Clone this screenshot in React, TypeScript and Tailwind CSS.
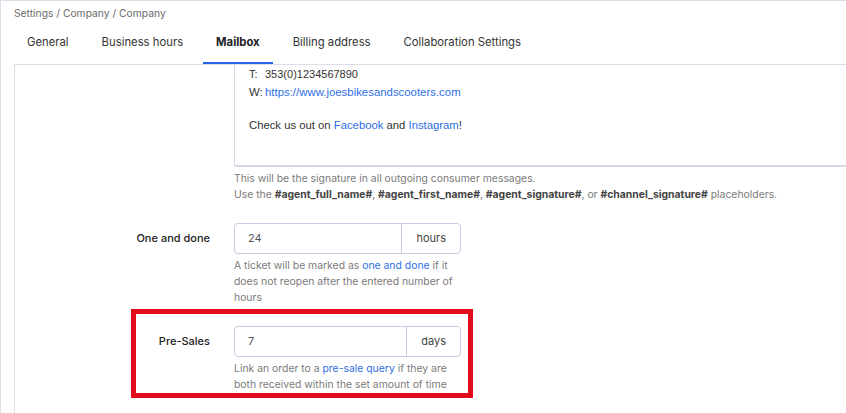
import React from "react";

const tabs = ["General", "Business hours", "Mailbox", "Billing address", "Collaboration Settings"];

function AddonInput({ value, unit }: { value: string; unit: string }) {
  return (
    <div className="flex h-[31px] w-[227px] rounded-[4px] border border-[#c9cbe0] bg-white text-[11px]">
      <div className="flex flex-1 items-center pl-[13px] text-[#555]">{value}</div>
      <div className="flex items-center border-l border-[#c9cbe0] px-[14px] text-[#444]">{unit}</div>
    </div>
  );
}

function Row({ label, children }: { label: string; children: React.ReactNode }) {
  return (
    <div className="flex">
      <div className="flex h-[31px] w-[195px] items-center justify-end text-[11px] font-medium text-[#222]">{label}</div>
      <div className="ml-[24px] w-[227px]">{children}</div>
    </div>
  );
}

export default function App() {
  return (
    <div className="h-[413px] w-[846px] overflow-hidden border-l border-t border-[#dcdde8] bg-white font-['Inter',sans-serif]">
      <div className="pl-[13px]">
        <div className="flex h-[25px] items-center text-[10.3px] text-[#6b6b6b]">Settings / Company / Company</div>

        <div className="flex h-[38px] gap-[7px]">
          {tabs.map(t => (
            <div key={t}
              className={`h-[38px] px-[13px] pt-[8px] text-[11.3px] leading-[16px] ${t === "Mailbox" ? "border-b-2 border-[#2563eb] font-bold text-[#222]" : "text-[#333]"}`}>
              {t}
            </div>
          ))}
        </div>

        <div className="relative h-[400px] overflow-hidden border-l border-t border-[#dcdde8]">
          {/* signature editor, scrolled so its top is out of view */}
          <div className="ml-[219px] w-[640px] rounded-bl-[3px] border-b-2 border-l border-[#d6d7e3] pl-[14px] pb-[31px] font-['Liberation_Sans',Arial,sans-serif] text-[#333]">
            <div className="flex text-[11px] leading-[18px]">
              <span className="w-[16px]">T:</span><span>353(0)1234567890</span>
            </div>
            <div className="flex text-[11.4px] leading-[18px]">
              <span className="w-[16px]">W:</span><span className="text-[#2f6fe4]">https://www.joesbikesandscooters.com</span>
            </div>
            <div className="mt-[15px] text-[11.3px] leading-[18px]">
              Check us out on <span className="text-[#2f6fe4]">Facebook</span> and <span className="text-[#2f6fe4]">Instagram</span>!
            </div>
          </div>
          <div className="ml-[219px] mt-[4px] text-[10.4px] leading-[16px] text-[#7a7a7a]">
            <p>This will be the signature in all outgoing consumer messages.</p>
            <p>
              Use the <b className="text-[#444]">#agent_full_name#</b>, <b className="text-[#444]">#agent_first_name#</b>, <b className="text-[#444]">#agent_signature#</b>, or <b className="text-[#444]">#channel_signature#</b> placeholders.
            </p>
          </div>

          <div className="mt-[20px]">
            <Row label="One and done">
              <AddonInput value="24" unit="hours" />
              <p className="mt-[4px] text-[10.4px] leading-[16px] text-[#7a7a7a]">
                A ticket will be marked as <span className="text-[#2f6fe4]">one and done</span> if it does not reopen after the entered number of hours
              </p>
            </Row>
          </div>

          <div className="relative mt-[20px]">
            <Row label="Pre-Sales">
              <AddonInput value="7" unit="days" />
              <p className="mt-[4px] text-[10.4px] leading-[16px] text-[#7a7a7a]">
                Link an order to a <span className="text-[#2f6fe4]">pre-sale query</span> if they are both received within the set amount of time
              </p>
            </Row>
            {/* annotation box */}
            <div className="pointer-events-none absolute left-[116px] top-[-17px] h-[89px] w-[342px] border-[5px] border-[#e20c1c]" />
          </div>
        </div>
      </div>
    </div>
  );
}
